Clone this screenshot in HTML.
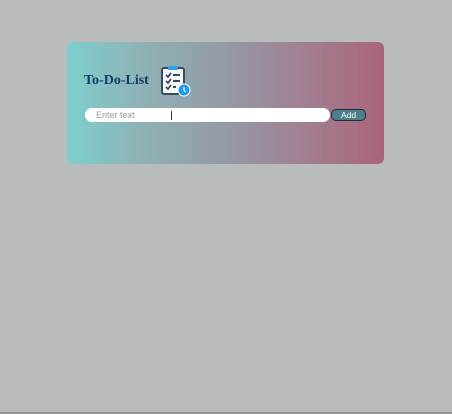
<!DOCTYPE html>
<html><head><style>
html,body{margin:0;padding:0;width:452px;height:414px;background:#b8bdbc;overflow:hidden;font-family:"Liberation Sans",sans-serif;}
.card{position:absolute;left:67px;top:42px;width:317px;height:122px;border-radius:6px;background:linear-gradient(90deg,#7dcfce 0%,#8fb0b4 25%,#949aa6 50%,#a27f92 75%,#ab6478 100%);}
h1{position:absolute;left:17px;top:31px;margin:0;font:bold 14px "Liberation Serif",serif;color:#0e3c6c;}
svg{position:absolute;left:93px;top:23px;}
.inp{position:absolute;left:18px;top:66px;width:245px;height:14px;background:#fff;border-radius:7px;}
.inp span{position:absolute;left:11px;top:2px;font-size:9px;color:#999;}
.inp i{position:absolute;left:86px;top:3px;width:1px;height:9px;background:#333;}
.btn{position:absolute;left:264px;top:67px;width:33px;height:10px;background:#4c7f89;border:1px solid #1e3036;border-radius:5px;color:#fff;font-size:8.5px;text-align:center;line-height:10px;}
.line{position:absolute;left:0;top:412px;width:452px;height:2px;background:#8e9392;}
</style></head><body>
<div class="card">
<h1>To-Do-List</h1>
<svg width="32" height="32" viewBox="0 0 32 32">
<rect x="2" y="3" width="22" height="26" rx="2" fill="#f4f6f8" stroke="#3c4a5e" stroke-width="2"/>
<rect x="8" y="1" width="10" height="4" rx="1" fill="#2aa3ef"/>
<path d="M6 10l2 2 3-4M6 16l2 2 3-4M6 22l2 2 3-4" stroke="#3c4a5e" stroke-width="1.8" fill="none"/>
<path d="M13 10h7M13 16h7M13 22h3" stroke="#3c4a5e" stroke-width="2"/>
<circle cx="24" cy="25" r="6" fill="#1f9cf0" stroke="#fff" stroke-width="1"/>
<path d="M24 22v3l1.5 2" stroke="#fff" stroke-width="1.2" fill="none"/>
</svg>
<div class="inp"><span>Enter text</span><i></i></div>
<div class="btn">Add</div>
</div>
<div class="line"></div>
</body></html>
